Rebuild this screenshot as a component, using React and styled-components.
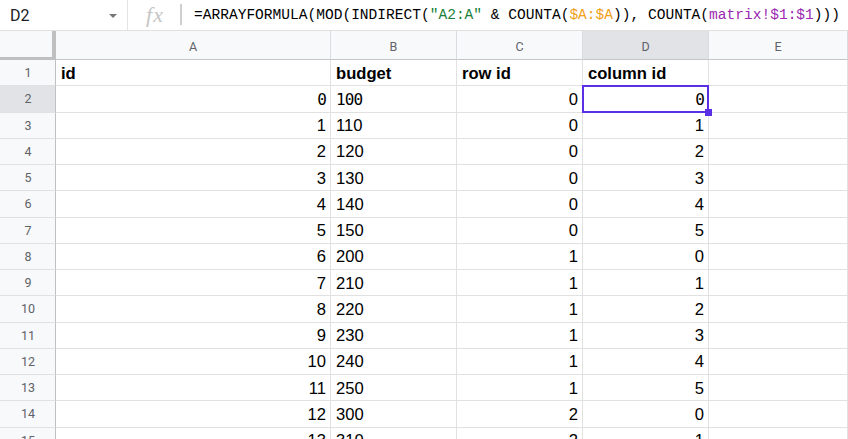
import React from 'react'
import styled, { createGlobalStyle } from 'styled-components'

const GlobalStyle = createGlobalStyle`
  html, body {
    margin: 0;
    padding: 0;
    background: #ffffff;
    overflow: hidden;
  }
  body {
    font-family: "Liberation Sans", Arial, sans-serif;
  }
`

const Page = styled.div`
  width: 848px;
  height: 439px;
  overflow: hidden;
  display: flex;
  flex-direction: column;
`

const FormulaBar = styled.div`
  height: 30px;
  display: flex;
  align-items: center;
  border-bottom: 1px solid #e1e1e1;
  background: #ffffff;
  flex-shrink: 0;
`

const NameBox = styled.div`
  width: 128px;
  height: 100%;
  box-sizing: border-box;
  display: flex;
  align-items: center;
  justify-content: space-between;
  padding: 0 10px 0 10px;
  font-family: Roboto, "Liberation Sans", sans-serif;
  font-size: 16px;
  color: #202124;
  border-right: 1px solid #e3e3e3;
`

const Caret = styled.span`
  width: 0;
  height: 0;
  border-left: 4px solid transparent;
  border-right: 4px solid transparent;
  border-top: 4px solid #777;
  margin-top: 2px;
`

const Fx = styled.div`
  width: 54px;
  height: 100%;
  display: flex;
  align-items: center;
  justify-content: center;
  position: relative;
  font-family: "Liberation Serif", serif;
  font-style: italic;
  font-size: 22px;
  color: #c6c6c6;
  letter-spacing: 1px;
  &::after {
    content: '';
    position: absolute;
    right: 0;
    top: 4px;
    bottom: 5px;
    width: 2px;
    background: #cfcfcf;
  }
`

const FormulaText = styled.div`
  padding-left: 12px;
  font-family: "Liberation Mono", "DejaVu Sans Mono", monospace;
  font-size: 14.55px;
  color: #000000;
  white-space: nowrap;
`

const Ref = styled.span`
  color: ${({ $c }) => $c};
`

const Grid = styled.div`
  display: grid;
  grid-template-columns: 56px 275px 126px 126px 126px 139px;
  grid-template-rows: 29px repeat(15, 26.25px);
  background: #ffffff;
`

const Corner = styled.div`
  background: #f8f9fa;
  box-sizing: border-box;
  border-right: 4px solid #c0c0c0;
  border-bottom: 4px solid #c0c0c0;
  margin-bottom: -1px;
`

const ColHead = styled.div`
  background: ${({ $active }) => ($active ? '#e1e3e6' : '#f8f9fa')};
  border-right: 1px solid #dadce0;
  border-bottom: 1px solid #c4c7c5;
  display: flex;
  align-items: center;
  justify-content: center;
  font-family: Roboto, "Liberation Sans", sans-serif;
  font-size: 12.5px;
  color: #5f6368;
  padding-top: 2px;
  box-sizing: border-box;
`

const RowHead = styled.div`
  background: ${({ $active }) => ($active ? '#e1e3e6' : '#f8f9fa')};
  border-right: 1px solid #c0c0c0;
  border-bottom: 1px solid #e1e1e1;
  display: flex;
  align-items: center;
  justify-content: center;
  font-family: Roboto, "Liberation Sans", sans-serif;
  font-size: 12.5px;
  color: #5f6368;
  box-sizing: border-box;
  padding-left: 1px;
`

const Cell = styled.div`
  position: relative;
  z-index: ${({ $selected }) => ($selected ? 2 : 'auto')};
  border-right: 1px solid #e1e1e1;
  border-bottom: 1px solid #e1e1e1;
  box-sizing: border-box;
  display: flex;
  align-items: center;
  justify-content: ${({ $num }) => ($num ? 'flex-end' : 'flex-start')};
  padding: 2px 4px 0 5px;
  font-family: ${({ $mono }) =>
    $mono ? '"DejaVu Sans Mono", "Liberation Mono", monospace' : '"Liberation Sans", Arial, sans-serif'};
  font-size: ${({ $mono }) => ($mono ? '16px' : '16.6px')};
  letter-spacing: ${({ $mono }) => ($mono ? '-0.9px' : '0')};
  font-weight: ${({ $bold }) => ($bold ? 700 : 400)};
  color: #000000;
  white-space: nowrap;
`

const Selection = styled.div`
  position: absolute;
  left: -1px;
  top: -1px;
  right: -1px;
  bottom: -1px;
  border: 2px solid #5a2fe6;
  pointer-events: none;
  &::after {
    content: '';
    position: absolute;
    right: -5px;
    bottom: -5px;
    width: 7px;
    height: 7px;
    background: #5a2fe6;
  }
`

const budgets = [100, 110, 120, 130, 140, 150, 200, 210, 220, 230, 240, 250, 300, 310]
const columns = ['A', 'B', 'C', 'D', 'E']

const rows = budgets.map((b, i) => ({
  id: i,
  budget: b,
  rowId: Math.floor(i / 6),
  colId: i % 6,
}))

const App = () => {
  return (
    <Page>
      <GlobalStyle />
      <FormulaBar>
        <NameBox>
          D2
          <Caret />
        </NameBox>
        <Fx>fx</Fx>
        <FormulaText>
          =ARRAYFORMULA(MOD(INDIRECT(<Ref $c="#188038">"A2:A"</Ref> &amp; COUNTA(
          <Ref $c="#f0a019">$A:$A</Ref>)), COUNTA(<Ref $c="#9c27b0">matrix!$1:$1</Ref>)))
        </FormulaText>
      </FormulaBar>
      <Grid>
        <Corner />
        {columns.map((c) => (
          <ColHead key={c} $active={c === 'D'}>
            {c}
          </ColHead>
        ))}

        <RowHead>1</RowHead>
        <Cell $bold>id</Cell>
        <Cell $bold>budget</Cell>
        <Cell $bold>row id</Cell>
        <Cell $bold>column id</Cell>
        <Cell />

        {rows.map((r, i) => {
          const first = i === 0
          return (
            <React.Fragment key={r.id}>
              <RowHead $active={first}>{i + 2}</RowHead>
              <Cell $num $mono={first}>{r.id}</Cell>
              <Cell $mono={first}>{r.budget}</Cell>
              <Cell $num>{r.rowId}</Cell>
              <Cell $num $mono={first} $selected={first}>
                {r.colId}
                {first && <Selection />}
              </Cell>
              <Cell />
            </React.Fragment>
          )
        })}
      </Grid>
    </Page>
  )
}

export default App
